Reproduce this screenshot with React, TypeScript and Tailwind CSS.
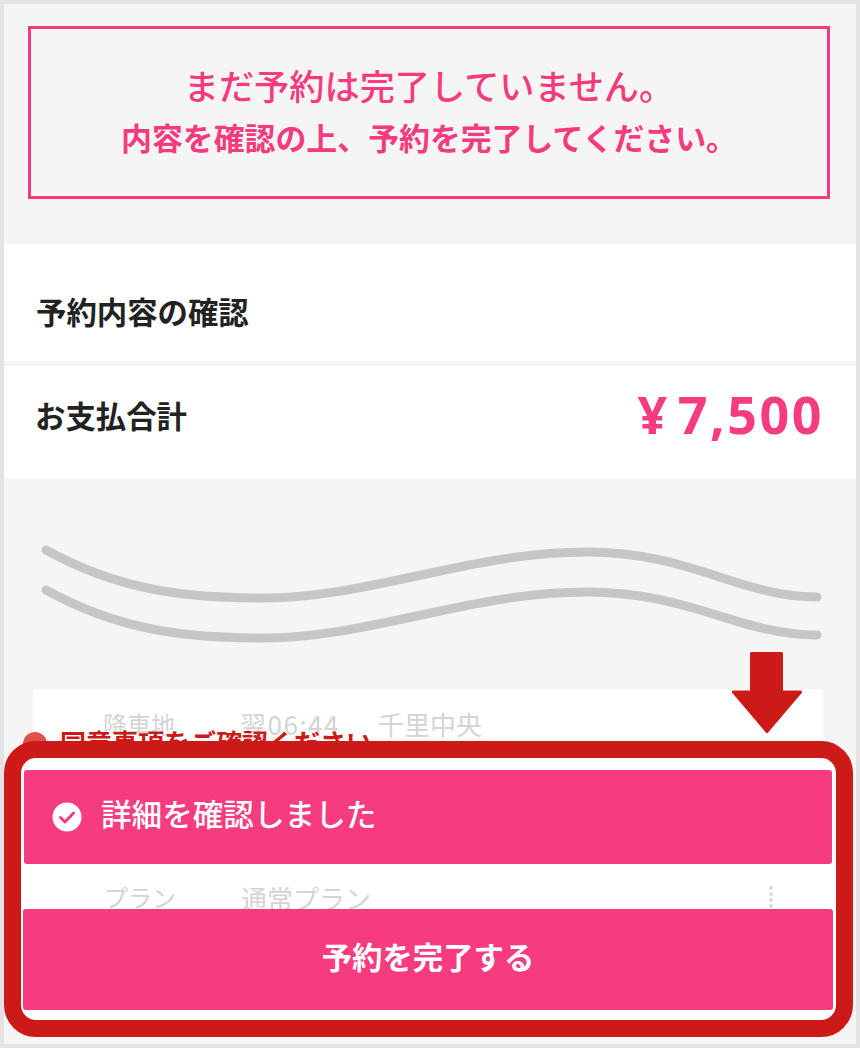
const font = "font-['Noto_Sans_CJK_JP','Noto_Sans',sans-serif]";

function CheckIcon() {
  return (
    <svg width="30" height="30" viewBox="0 0 30 30" className="shrink-0">
      <circle cx="15" cy="15" r="14.5" fill="#fff" />
      <path d="M8.5 15.5l4.5 4.5 8.5-9" fill="none" stroke="#f63b7e" strokeWidth="3" strokeLinecap="round" strokeLinejoin="round" />
    </svg>
  );
}

function Wave() {
  return (
    <svg width="852" height="130" viewBox="0 0 852 130" className="block">
      <g fill="none" stroke="#c6c6c6" strokeWidth="9" strokeLinecap="round">
        <path d="M42 6C118 48 186 54 259 54C366 54 466 8 583 8C686 8 736 53 813 53" />
        <path d="M42 46C118 88 186 94 259 94C366 94 466 48 583 48C686 48 736 91 813 91" />
      </g>
    </svg>
  );
}

function Arrow() {
  return (
    <svg width="70" height="81" viewBox="0 0 70 81" className="absolute left-[728px] top-[648px]">
      <path d="M19.5 1.5h30V40H68.5L35 79.5 1.5 40H19.5z" fill="#cb1a18" stroke="#cb1a18" strokeWidth="3" strokeLinejoin="round" />
    </svg>
  );
}

export default function App() {
  return (
    <div className={`${font} relative w-[860px] h-[1048px] overflow-hidden border-4 border-[#e3e3e3] bg-[#f5f5f5]`}>
      <div className="ml-6 w-[802px] mt-[22px] h-[173px] border-[3.5px] border-[#f43b7d] flex flex-col items-center justify-center text-[#f43b7d] font-medium">
        <p className="text-[35.2px] leading-[40px] mb-[12px]">まだ予約は完了していません。</p>
        <p className="text-[30.9px] leading-[40px] mb-[3px] font-bold">内容を確認の上、予約を完了してください。</p>
      </div>

      <div className="mt-[45px] h-[117px] bg-white flex items-center pl-8 pt-[18px]">
        <h2 className="text-[30.4px] font-bold text-[#222] leading-none">予約内容の確認</h2>
      </div>
      <div className="mt-[5px] h-[113px] bg-white flex items-center justify-between pl-[31px] pr-[32px] pb-[14px]">
        <span className="text-[30.4px] font-bold text-[#222] leading-none">お支払合計</span>
        <span className="font-['Open_Sans',sans-serif] text-[52px] font-bold text-[#f63b7e] leading-none tracking-[2.5px] mb-[4px]">
          ¥<span className="ml-[8px]">7,500</span>
        </span>
      </div>

      <div className="mt-[65px]">
        <Wave />
      </div>

      <div className="mt-[15px] ml-[29px] w-[790px] h-[52px] bg-white overflow-hidden">
        <div className="flex items-center pt-[22px] text-[24px] text-[#d4d4d4] leading-none">
          <span className="ml-[70px] w-[137px]">降車地</span>
          <span className="w-[138px] text-[26px] tracking-[1.5px]">翌06:44</span>
          <span className="text-[26px]">千里中央</span>
        </div>
      </div>
      <div className="absolute left-[19px] top-[728px] w-[24px] h-[24px] rounded-full bg-[#e0514b]" />
      <p className="absolute left-[56px] top-[720px] text-[26px] font-bold text-[#cb1a18] leading-[36px] whitespace-nowrap">同意事項をご確認ください</p>
      <Arrow />

      <div className="relative mr-[3px] h-[296px] border-[17px] border-[#cb1a18] rounded-[32px] bg-white overflow-hidden">
        <div className="pt-[12px]">
          <div className="ml-[3px] w-[808px] h-[94px] bg-[#f63b7e] rounded-[3px] flex items-center pl-[28px]">
            <CheckIcon />
            <span className="ml-[19px] mb-[8px] text-[30.6px] text-white font-medium leading-none">詳細を確認しました</span>
          </div>
          <div className="h-[45px] overflow-hidden flex items-start pt-[21px] text-[24px] text-[#d4d4d4] leading-none relative">
            <span className="ml-[83px] w-[137px]">プラン</span>
            <span className="text-[26px]">通常プラン</span>
            <span className="absolute left-[748px] top-[22px] flex flex-col gap-[2px]">
              <i className="block w-[4px] h-[4px] rounded-full bg-[#dcdcdc]" />
              <i className="block w-[4px] h-[4px] rounded-full bg-[#dcdcdc]" />
              <i className="block w-[4px] h-[4px] rounded-full bg-[#dcdcdc]" />
              <i className="block w-[4px] h-[4px] rounded-full bg-[#dcdcdc]" />
            </span>
          </div>
          <button className="block ml-[2px] w-[810px] h-[101px] bg-[#f63b7e] rounded-[3px] text-white text-[30.4px] font-bold leading-none pb-[6px]">予約を完了する</button>
        </div>
      </div>
    </div>
  );
}
